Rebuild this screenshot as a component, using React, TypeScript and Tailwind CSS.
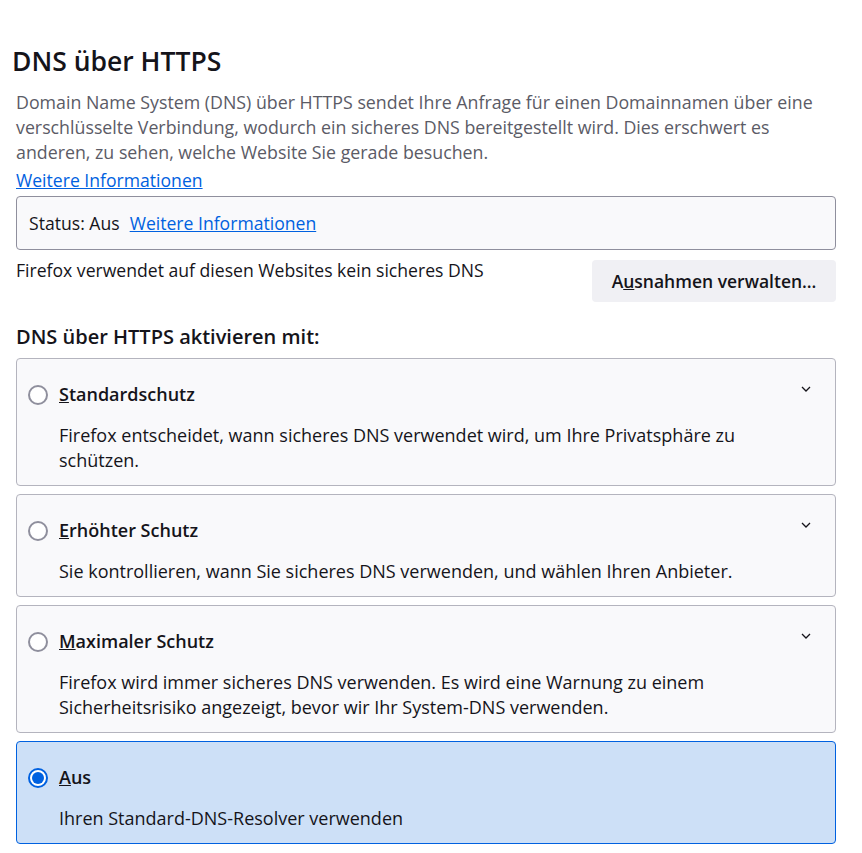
interface Option {
  id: string;
  accessKey: string;
  rest: string;
  description: string;
  selected?: boolean;
}

const options: Option[] = [
  {
    id: 'default',
    accessKey: 'S',
    rest: 'tandardschutz',
    description: 'Firefox entscheidet, wann sicheres DNS verwendet wird, um Ihre Privatsphäre zu schützen.',
  },
  {
    id: 'increased',
    accessKey: 'E',
    rest: 'rhöhter Schutz',
    description: 'Sie kontrollieren, wann Sie sicheres DNS verwenden, und wählen Ihren Anbieter.',
  },
  {
    id: 'max',
    accessKey: 'M',
    rest: 'aximaler Schutz',
    description:
      'Firefox wird immer sicheres DNS verwenden. Es wird eine Warnung zu einem Sicherheitsrisiko angezeigt, bevor wir Ihr System-DNS verwenden.',
  },
  {
    id: 'off',
    accessKey: 'A',
    rest: 'us',
    description: 'Ihren Standard-DNS-Resolver verwenden',
    selected: true,
  },
];

const Radio = ({ checked }: { checked?: boolean }) =>
  checked ? (
    <span className="shrink-0 w-[20px] h-[20px] rounded-full border-2 border-[#0061e0] bg-white flex items-center justify-center">
      <span className="w-[12px] h-[12px] rounded-full bg-[#0061e0]" />
    </span>
  ) : (
    <span className="shrink-0 w-[20px] h-[20px] rounded-full border-2 border-[#8f8f9d] bg-white" />
  );

const Chevron = () => (
  <svg width="10" height="6" viewBox="0 0 10 6" className="ml-auto -mt-[12px]" fill="none">
    <path d="M1 1l4 4 4-4" stroke="#15141a" strokeWidth="1.3" />
  </svg>
);

export default function App() {
  return (
    <div className="w-[862px] h-[853px] overflow-hidden bg-white text-[#15141a] font-['Open_Sans',sans-serif]">
      <div className="pt-[43px] pl-[12px] pr-[26px]">
        <h1 className="text-[26.5px] leading-[36px] font-semibold">DNS über HTTPS</h1>

        <div className="pl-[4px]">
          <p className="mt-[11px] text-[17.8px] leading-[25px] text-[#5b5b66]">
            Domain Name System (DNS) über HTTPS sendet Ihre Anfrage für einen Domainnamen über eine verschlüsselte
            Verbindung, wodurch ein sicheres DNS bereitgestellt wird. Dies erschwert es anderen, zu sehen, welche
            Website Sie gerade besuchen.
          </p>
          <a className="mt-[3px] block w-fit text-[17.6px] leading-[25px] text-[#0061e0] underline">Weitere Informationen</a>

          {/* Status */}
          <div className="mt-[3px] h-[54px] flex items-center gap-[10px] px-[12px] rounded-[4px] border border-[#8f8f9d] bg-[#f9f9fb] text-[17.6px]">
            <span>Status: Aus</span>
            <a className="text-[#0061e0] underline">Weitere Informationen</a>
          </div>

          <div className="mt-[8px] flex items-start justify-between">
            <span className="text-[17.6px] leading-[25px]">Firefox verwendet auf diesen Websites kein sicheres DNS</span>
            <button className="mt-[2px] h-[42px] w-[244px] rounded-[4px] bg-[#f0f0f4] text-[17.5px] font-semibold">
              A<span className="underline">u</span>snahmen verwalten…
            </button>
          </div>

          <h2 className="mt-[22px] text-[20px] leading-[25px] font-semibold">DNS über HTTPS aktivieren mit:</h2>

          <div className="mt-[9px] flex flex-col gap-[8px]">
            {options.map((o) => (
              <div
                key={o.id}
                className={
                  o.selected
                    ? 'rounded-[4px] border border-[#0061e0] bg-[#cde0f7] pl-[11px] pr-[24px] pt-[23px] pb-[12px]'
                    : 'rounded-[4px] border border-[#b4b4be] bg-[#f9f9fb] pl-[11px] pr-[24px] pt-[23px] pb-[12px]'
                }
              >
                <div className="flex items-center">
                  <Radio checked={o.selected} />
                  <span className="ml-[11px] text-[18px] leading-[25px] font-semibold">
                    <span className="underline">{o.accessKey}</span>
                    {o.rest}
                  </span>
                  {!o.selected && <Chevron />}
                </div>
                <p className="mt-[16px] ml-[31px] text-[18px] leading-[25px]">{o.description}</p>
              </div>
            ))}
          </div>
        </div>
      </div>
    </div>
  );
}
